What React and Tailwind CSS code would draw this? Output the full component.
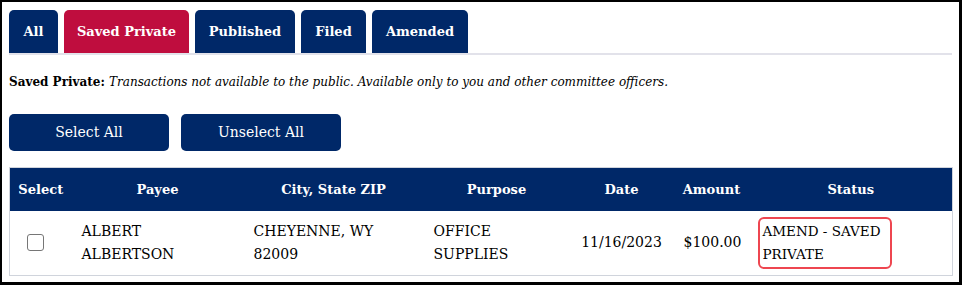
import React, { useState } from 'react';

const tabs = [
  { label: 'All', width: 'w-[49px]' },
  { label: 'Saved Private', width: 'w-[125px]' },
  { label: 'Published', width: 'w-[100px]' },
  { label: 'Filed', width: 'w-[65px]' },
  { label: 'Amended', width: 'w-[96px]' },
];

const columns = [
  { label: 'Select', width: 'w-[62px]' },
  { label: 'Payee', width: 'w-[172px]' },
  { label: 'City, State ZIP', width: 'w-[180px]' },
  { label: 'Purpose', width: 'w-[146px]' },
  { label: 'Date', width: 'w-[104px]' },
  { label: 'Amount', width: 'w-[76px]' },
  { label: 'Status', width: 'w-[203px]' },
];

const rows = [
  {
    payee: 'ALBERT ALBERTSON',
    city: 'CHEYENNE, WY 82009',
    purpose: 'OFFICE SUPPLIES',
    date: '11/16/2023',
    amount: '$100.00',
    status: 'AMEND - SAVED PRIVATE',
  },
];

export default function App() {
  const [activeTab, setActiveTab] = useState('Saved Private');
  const [checked, setChecked] = useState({});

  return (
    <div
      className="w-[962px] h-[285px] bg-white border-black border-t-2 border-l-2 border-r-[3px] border-b-[3px] pl-[7px] pr-[7px] pt-[8px] text-black"
      style={{ fontFamily: 'Georgia, "DejaVu Serif", serif' }}
    >
      {/* Tabs */}
      <div className="flex gap-[6px] border-b-2 border-[#e2e2ea]">
        {tabs.map((tab) => (
          <button
            key={tab.label}
            onClick={() => setActiveTab(tab.label)}
            className={`${tab.width} h-[43px] rounded-t-[5px] text-white font-bold text-[13px] text-center whitespace-nowrap ${
              activeTab === tab.label ? 'bg-[#bf0d3e]' : 'bg-[#002868]'
            }`}
          >
            {tab.label}
          </button>
        ))}
      </div>

      <p className="mt-[19px] text-[12px] leading-[16px]">
        <span className="font-bold">Saved Private: </span>
        <span className="italic">Transactions not available to the public. Available only to you and other committee officers.</span>
      </p>

      {/* Buttons */}
      <div className="flex gap-[12px] mt-[24px]">
        <button className="w-[160px] h-[37px] rounded-[5px] bg-[#002868] text-white text-[14px]">Select All</button>
        <button className="w-[160px] h-[37px] rounded-[5px] bg-[#002868] text-white text-[14px]">Unselect All</button>
      </div>

      {/* Table */}
      <table className="mt-[16px] w-[943px] border border-[#d0d4dc] border-collapse table-fixed">
        <thead>
          <tr className="bg-[#002868] text-white h-[43px]">
            {columns.map((c) => (
              <th key={c.label} className={`${c.width} text-[13px] font-bold text-center`}>
                {c.label}
              </th>
            ))}
          </tr>
        </thead>
        <tbody>
          {rows.map((r, i) => (
            <tr key={i} className="h-[65px] text-[14px] leading-[23px] align-middle">
              <td className="pl-[17px]">
                <button
                  onClick={() => setChecked({ ...checked, [i]: !checked[i] })}
                  className="block w-[17px] h-[17px] rounded-[3px] border border-[#767676] bg-white"
                />
              </td>
              <td className="px-[10px]">{r.payee}</td>
              <td className="px-[10px]">{r.city}</td>
              <td className="px-[10px]">{r.purpose}</td>
              <td className="px-[10px] text-center">{r.date}</td>
              <td className="px-[10px] text-center">{r.amount}</td>
              <td className="pl-[8px] pr-[10px]">
                <div className="w-[134px] border-2 border-[#ee4650] rounded-[6px] px-[3px] text-[13.5px] leading-[23px] py-[1px]">
                  {r.status}
                </div>
              </td>
            </tr>
          ))}
        </tbody>
      </table>
    </div>
  );
}
